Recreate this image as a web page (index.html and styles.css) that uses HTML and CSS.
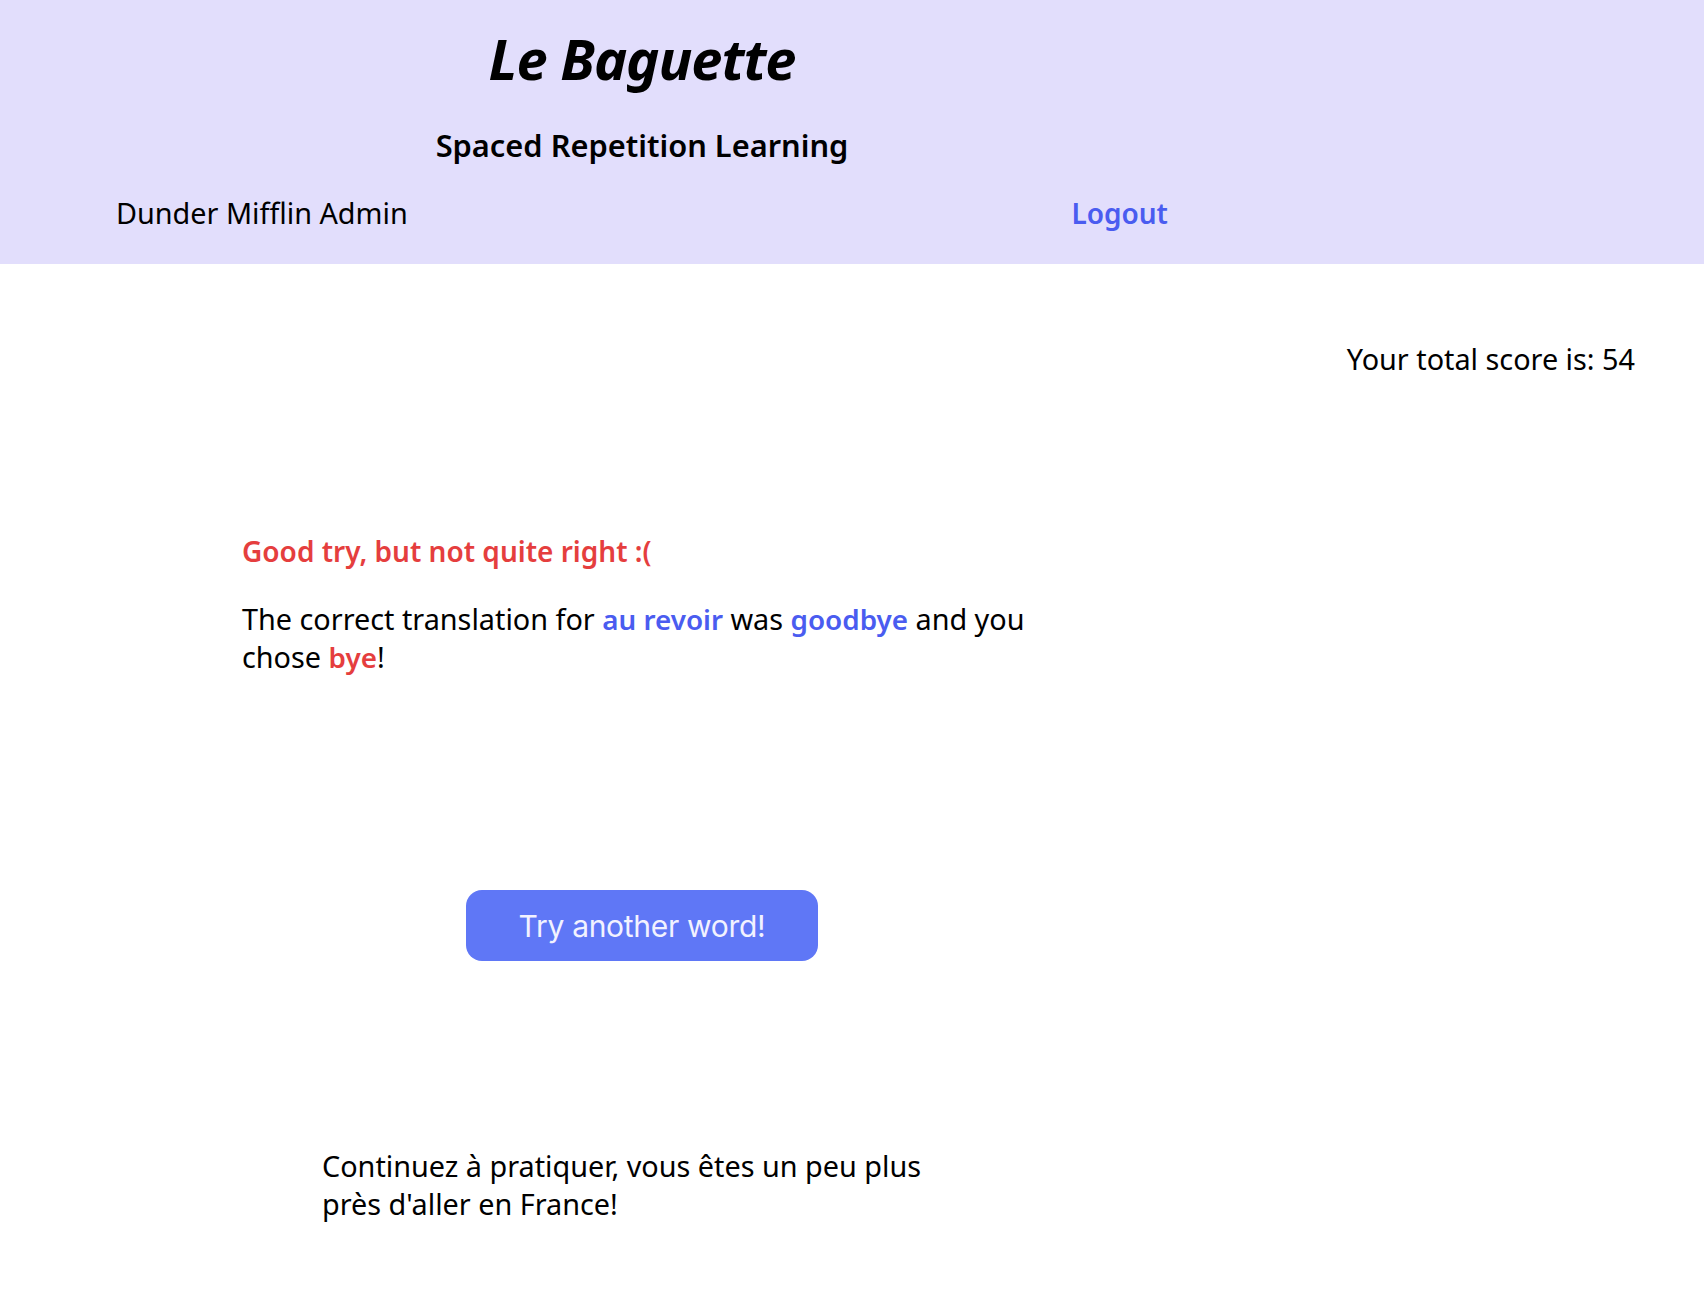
FILE: index.html
```html
<!DOCTYPE html>
<html lang="en">
<head>
<meta charset="utf-8">
<title>Le Baguette</title>
<link rel="stylesheet" href="styles.css">
</head>
<body>
<header class="topbar">
  <div class="topbar-inner">
    <h1 class="brand">Le Baguette</h1>
    <h2 class="tagline">Spaced Repetition Learning</h2>
    <nav class="user-nav">
      <span class="user-name">Dunder Mifflin Admin</span>
      <a class="logout" href="#">Logout</a>
    </nav>
  </div>
</header>
<main class="page">
  <div class="score-row">
    <p class="score">Your total score is: 54</p>
  </div>
  <section class="quiz">
    <div class="feedback">
      <h3 class="result-title">Good try, but not quite right :(</h3>
      <p class="result-text">The correct translation for <span class="word-blue">au revoir</span> was <span class="word-blue">goodbye</span> and you chose <span class="word-red">bye</span>!</p>
    </div>
    <button class="next-btn" type="button">Try another word!</button>
    <p class="encourage">Continuez à pratiquer, vous êtes un peu plus près d'aller en France!</p>
  </section>
</main>
</body>
</html>
```
FILE: styles.css
```css
* { box-sizing: border-box; }
html, body { margin: 0; padding: 0; }
body {
  font-family: "Noto Sans", "Open Sans", sans-serif;
  color: #000;
  background: #fff;
}
.topbar {
  background: #e2defc;
  padding: 20px 0 32px;
}
.topbar-inner {
  width: 1052px;
  margin-left: 116px;
  display: flex;
  flex-direction: column;
  align-items: center;
}
.brand {
  margin: 0;
  font-size: 56px;
  font-weight: 700;
  font-style: italic;
  line-height: 76px;
  letter-spacing: -1px;
}
.tagline {
  margin: 28px 0 0;
  font-size: 30.8px;
  font-weight: 600;
  line-height: 42px;
}
.user-nav {
  margin-top: 28px;
  width: 100%;
  display: flex;
  justify-content: space-between;
  align-items: baseline;
  font-size: 28.8px;
  line-height: 38px;
}
.logout {
  color: #4a5cf0;
  font-size: 28px;
  font-weight: 600;
  text-decoration: none;
}
.score-row {
  padding: 76px 69px 0 0;
  display: flex;
  justify-content: flex-end;
}
.score {
  margin: 0;
  font-size: 28.8px;
  line-height: 38px;
}
.quiz {
  width: 1052px;
  margin-left: 116px;
  display: flex;
  flex-direction: column;
  align-items: center;
}
.feedback {
  width: 800px;
  margin-top: 154px;
}
.result-title {
  margin: 0;
  color: #e53e3e;
  font-size: 28px;
  font-weight: 600;
  line-height: 38px;
}
.result-text {
  margin: 30px 0 0;
  font-size: 28.8px;
  line-height: 38px;
}
.word-blue { color: #4a5cf0; font-weight: 600; font-size: 27.8px; }
.word-red { color: #e53e3e; font-weight: 600; font-size: 27.8px; }
.next-btn {
  margin-top: 214px;
  width: 352px;
  height: 71px;
  border: none;
  border-radius: 16px;
  background: #5f77f6;
  color: #f2f2ff;
  font-family: "Inter", sans-serif;
  font-size: 30px;
  letter-spacing: -0.3px;
  cursor: pointer;
}
.encourage {
  width: 640px;
  margin: 186px 0 60px;
  font-size: 28.8px;
  line-height: 38px;
}
```
